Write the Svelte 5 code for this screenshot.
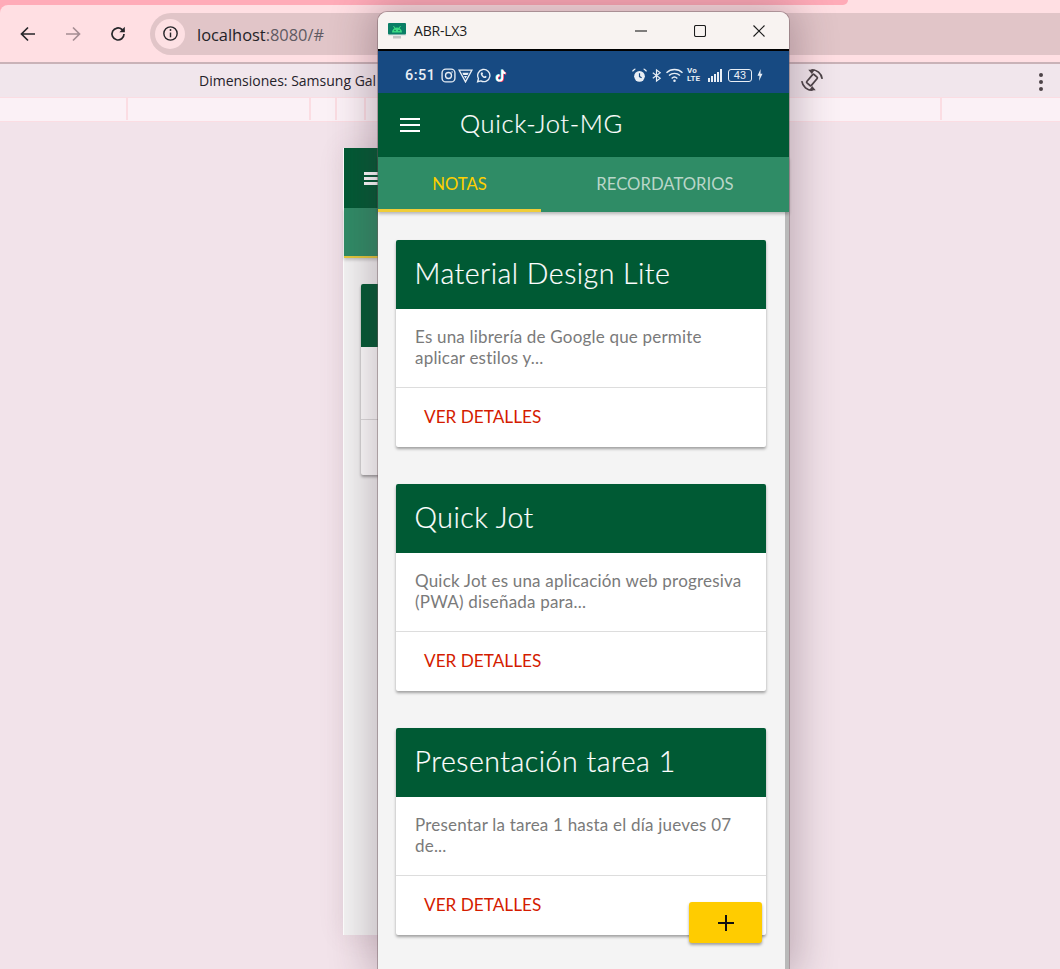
<script lang="ts">
  // Chrome devtools device view with the scrcpy phone window on top of it.
  const notes = [
    { title: 'Material Design Lite', text: 'Es una librería de Google que permite aplicar estilos y...' },
    { title: 'Quick Jot', text: 'Quick Jot es una aplicación web progresiva (PWA) diseñada para...' },
    { title: 'Presentación tarea 1', text: 'Presentar la tarea 1 hasta el día jueves 07 de...' }
  ];
  const ticks = [128, 183, 26, 29, 576];
</script>

<div class="page">
  <div class="top">
    <div class="tabstrip"></div>
    <header class="toolbar">
      <svg class="nav" viewBox="0 0 20 20" aria-hidden="true"><path d="M17 10H4M10 3.500 3.500 10l6.500 6.500" /></svg>
      <svg class="nav off" viewBox="0 0 20 20" aria-hidden="true"><path d="M3 10h13M10 3.500 16.500 10 10 16.500" /></svg>
      <svg class="nav" viewBox="0 0 20 20" aria-hidden="true"><path d="M16 10a6 6 0 1 1-2-4.500L16 7.500" /><path class="solid" d="M16.800 2.800v5.400h-5.400z" /></svg>
      <div class="omnibox">
        <span class="site">
          <svg viewBox="0 0 20 20" aria-hidden="true"><circle cx="10" cy="10" r="7" /><path d="M10 9v5" /><circle class="dot" cx="10" cy="6.300" r="1" /></svg>
        </span>
        <span class="url">localhost<span>:8080/#</span></span>
      </div>
    </header>
  </div>

  <div class="devbar">
    <span class="dims">Dimensiones: Samsung Gal</span>
    <svg class="rotate" viewBox="0 0 24 24" aria-hidden="true">
      <g transform="rotate(40 12 12)">
        <rect x="9" y="6.500" width="6" height="11" rx="1" />
        <path d="M5 4.500A10.500 10.500 0 0 1 19 4.500M19 19.500A10.500 10.500 0 0 1 5 19.500" />
        <path class="solid" d="M2.500 6.500 7.500 2 8 7.500zM21.500 17.500 16.500 22 16 16.500z" />
      </g>
    </svg>
    <span class="kebab"><i></i><i></i><i></i></span>
  </div>

  <div class="ruler">
    {#each ticks as w}
      <span class="tick" style="width:{w}px"></span>
    {/each}
  </div>

  <main class="stage">
    <section class="preview">
      <div class="preview-bar"><span class="burger small"><i></i><i></i><i></i></span></div>
      <div class="preview-tabs"></div>
      <div class="preview-card">
        <div class="pc-head"></div>
        <div class="pc-body"></div>
        <div class="pc-foot"></div>
      </div>
    </section>
  </main>

  <section class="window">
    <div class="titlebar">
      <svg class="appicon" viewBox="0 0 18 18" aria-hidden="true">
        <rect class="stand" x="5" y="14" width="8" height="2.500" />
        <rect class="base" x="0" y="12" width="18" height="2" />
        <rect class="screen" x="0" y="1" width="18" height="11.500" rx="1" />
        <path class="droid" d="M4 10.500a5 5 0 0 1 10 0z" />
        <path class="droid-line" d="M5.500 4 7 6.500M12.500 4 11 6.500" />
        <circle class="eye" cx="7" cy="8.500" r=".7" />
        <circle class="eye" cx="11" cy="8.500" r=".7" />
      </svg>
      <span class="wname">ABR-LX3</span>
      <span class="wbtns">
        <svg viewBox="0 0 12 12" aria-hidden="true"><path d="M0 6h12" /></svg>
        <svg viewBox="0 0 12 12" aria-hidden="true"><rect x=".5" y=".5" width="11" height="11" rx="1.500" /></svg>
        <svg viewBox="0 0 12 12" aria-hidden="true"><path d="M.5.5l11 11M11.500.5l-11 11" /></svg>
      </span>
    </div>

    <div class="status">
      <span class="time">6:51</span>
      <svg class="si" viewBox="0 0 14 14" aria-hidden="true"><rect x="1" y="1" width="12" height="12" rx="3.500" /><circle cx="7" cy="7" r="2.800" /><circle class="fill" cx="10.300" cy="3.700" r=".7" /></svg>
      <svg class="si" viewBox="0 0 14 14" aria-hidden="true"><path d="M1 2h12L7 13z" /><path class="fill" d="M4 4.500h6L9 6.500H5zM5.500 7.500h3L7 10z" /></svg>
      <svg class="si" viewBox="0 0 14 14" aria-hidden="true"><path d="M1.500 12.800l.8-3A5.700 5.700 0 1 1 4.500 12z" /><path class="fill" d="M5 4.300c-1 .8-.7 2 .4 3.300S8 9.800 9 9.300c.8-.4 1-1 .8-1.300L8.500 7.300l-.6.6C7 7.500 6.500 7 6 6l.6-.6L6 4.100c-.3-.2-.7-.1-1 .2z" /></svg>
      <svg class="si tiktok" viewBox="0 0 14 14" aria-hidden="true">
        <path class="tk-r" d="M8.700 1.500v7.800a2.500 2.500 0 1 1-2.500-2.500M8.700 2c.3 1.700 1.400 2.700 3 2.900" transform="translate(.7 .4)" />
        <path class="tk-c" d="M8.700 1.500v7.800a2.500 2.500 0 1 1-2.500-2.500M8.700 2c.3 1.700 1.400 2.700 3 2.900" transform="translate(-.6 -.2)" />
        <path class="tk-w" d="M8.700 1.500v7.800a2.500 2.500 0 1 1-2.500-2.500M8.700 2c.3 1.700 1.400 2.700 3 2.900" />
      </svg>
      <span class="grow"></span>
      <svg class="si alarm" viewBox="0 0 14 14" aria-hidden="true"><circle class="fill" cx="7" cy="7.800" r="5" /><path class="fill" d="M.6 3.800 3.600 1l-.9-.6L.3 2.200zM13.400 3.800 10.400 1l.9-.6 2.400 1.800z" /><path class="dark" d="M7 4.800v3.200l2 1.200" /></svg>
      <svg class="si bt" viewBox="0 0 14 14" aria-hidden="true"><path d="M3 4l8 6-4 3V1l4 3-8 6" /></svg>
      <svg class="si wifi" viewBox="0 0 16 14" aria-hidden="true"><path d="M1 5a10 10 0 0 1 14 0M3.200 7.500a7 7 0 0 1 9.600 0M5.500 10a3.700 3.700 0 0 1 5 0" /><circle class="fill" cx="8" cy="12" r="1.100" /></svg>
      <span class="volte">Vo<br />LTE</span>
      <span class="signal"><i></i><i></i><i></i><i></i><i></i></span>
      <span class="battery">43</span>
      <svg class="bolt" viewBox="0 0 6 12" aria-hidden="true"><path d="M3.600 0 .5 6.800h2L2 12l3.500-7.200h-2z" /></svg>
    </div>

    <div class="appbar">
      <span class="burger"><i></i><i></i><i></i></span>
      <span class="apptitle">Quick-Jot-MG</span>
    </div>

    <nav class="tabs">
      <span class="tab active">NOTAS</span>
      <span class="tab">RECORDATORIOS</span>
    </nav>

    <div class="content">
      {#each notes as note}
        <article class="card">
          <h2>{note.title}</h2>
          <p>{note.text}</p>
          <div class="actions"><span class="link">VER DETALLES</span></div>
        </article>
      {/each}
      <button class="fab" aria-label="Agregar">
        <svg viewBox="0 0 16 16" aria-hidden="true"><path d="M8 0v16M0 8h16" /></svg>
      </button>
    </div>
  </section>
</div>

<style>
  :global(body) { background: #f2e3ea; }

  .page {
    position: relative;
    display: flex;
    flex-direction: column;
    height: 969px;
    overflow: hidden;
    background: #f2e3ea;
    font-family: "Open Sans", "Liberation Sans", sans-serif;
  }

  /* browser chrome */
  .top {
    /* the small square shows through the toolbar's rounded top-left corner */
    background: linear-gradient(#ffabb8, #ffabb8) no-repeat 0 0 / 20px 20px, #ffdfe3;
  }
  .tabstrip {
    height: 5px;
    width: 848px;
    background: #ffabb8;
    border-bottom-right-radius: 8px;
  }
  .toolbar {
    display: flex;
    align-items: center;
    height: 59px;
    padding-left: 18px;
    box-sizing: border-box;
    background: #ffdfe3;
    border-top-left-radius: 8px;
    border-bottom: 2px solid #c9b2b7;
  }
  .nav { width: 20px; height: 20px; margin-right: 25px; flex: none; }
  .nav path { fill: none; stroke: #26262a; stroke-width: 1.700; }
  .nav.off path { stroke: #a58d93; }
  .nav .solid { fill: #26262a; stroke: none; }
  .omnibox {
    display: flex;
    align-items: center;
    flex: 1;
    height: 42px;
    margin-left: -3px;
    padding-left: 5px;
    border-radius: 21px 0 0 21px;
    background: #e1c5c8;
  }
  .site {
    display: grid;
    place-items: center;
    width: 30px;
    height: 30px;
    border-radius: 50%;
    background: #fde0e3;
  }
  .site svg { width: 19px; height: 19px; }
  .site circle, .site path { fill: none; stroke: #26262a; stroke-width: 1.500; }
  .site .dot { fill: #26262a; stroke: none; }
  .url { margin: 2px 0 0 12px; font-size: 16.400px; color: #232227; }
  .url span { color: #5f5a62; }

  .devbar {
    display: flex;
    align-items: center;
    height: 33px;
    padding-left: 199px;
    background: #f1e6ec;
    font-size: 14px;
    color: #25222a;
  }
  .dims { white-space: nowrap; }
  .rotate { position: absolute; left: 800px; top: 68px; width: 24px; height: 24px; }
  .rotate rect, .rotate path { fill: none; stroke: #4d4448; stroke-width: 1.700; }
  .rotate .solid { fill: #4d4448; stroke: none; }
  .kebab { position: absolute; left: 1039px; top: 73px; display: grid; gap: 3px; }
  .kebab i { width: 4px; height: 4px; border-radius: 50%; background: #4d4448; }

  .ruler {
    display: flex;
    height: 23px;
    background: #fbf1f6;
    border-top: 1px solid #fbdde3;
    border-bottom: 1px solid #fbdde3;
  }
  .tick { flex: none; border-right: 2px solid #fbdde3; height: 22px; box-sizing: border-box; }

  /* the page behind the phone window */
  .stage { flex: 1; padding: 26px 0 0 343px; }
  .preview {
    width: 360px;
    height: 787px;
    background: #f4f4f4;
    border-left: 1px solid #fff;
    box-sizing: border-box;
    box-shadow: 0 0 24px rgba(120, 90, 105, 0.12);
  }
  .preview-bar {
    height: 60px;
    padding: 24px 0 0 20px;
    box-sizing: border-box;
    background: #005a34;
  }
  .preview-tabs {
    height: 50px;
    background: #2f8c66;
    border-bottom: 2px solid #e3c83c;
    box-sizing: border-box;
    box-shadow: 0 2px 3px rgba(0, 0, 0, 0.2);
  }
  .preview-card {
    width: 300px;
    margin: 26px 0 0 17px;
    background: #fff;
    border-radius: 2px;
    box-shadow: 0 2px 3px rgba(0, 0, 0, 0.35);
  }
  .pc-head { height: 63px; background: #005a34; border-radius: 2px 2px 0 0; }
  .pc-body { height: 72px; }
  .pc-foot { height: 55px; border-top: 1px solid #ddd; }

  /* phone window */
  .window {
    position: absolute;
    left: 378px;
    top: 12px;
    width: 411px;
    height: 957px;
    display: flex;
    flex-direction: column;
    border-radius: 9px 9px 0 0;
    box-shadow: 0 0 0 1px rgba(110, 90, 95, 0.45), 0 0 40px 8px rgba(70, 40, 55, 0.3);
  }
  .titlebar {
    display: flex;
    align-items: center;
    height: 37px;
    flex: none;
    padding-left: 10px;
    box-sizing: border-box;
    background: #f8f3f1;
    border-radius: 9px 9px 0 0;
  }
  .appicon { width: 18px; height: 18px; margin-right: 8px; }
  .screen { fill: #0b7e66; }
  .base { fill: #e6e6e6; }
  .stand { fill: #c4c4c4; }
  .droid { fill: #3ddc84; }
  .droid-line { fill: none; stroke: #3ddc84; stroke-width: 1; }
  .eye { fill: #0b5e4c; }
  .wname { font-size: 14px; letter-spacing: -0.2px; color: #1c1c1c; }
  .wbtns { display: flex; margin-left: auto; padding-right: 24px; gap: 47px; }
  .wbtns svg { width: 12px; height: 12px; }
  .wbtns path, .wbtns rect { fill: none; stroke: #1c1c1c; stroke-width: 1.100; }

  .status {
    display: flex;
    align-items: center;
    flex: none;
    height: 44px;
    padding: 6px 26px 0 27px;
    box-sizing: border-box;
    border-top: 2px solid #000;
    background: #174a82;
    color: #e8eef5;
  }
  .time { font-size: 14.500px; font-weight: 500; margin-right: 5px; font-family: "Roboto", sans-serif; letter-spacing: 0.5px; }
  .si { width: 15px; height: 15px; margin-right: 2.500px; flex: none; }
  .si path, .si rect, .si circle { fill: none; stroke: #e8eef5; stroke-width: 1.250; }
  .si .fill { fill: #e8eef5; stroke: none; }
  .si .dark { stroke: #174a82; stroke-width: 1.100; }
  .tiktok path { stroke-width: 1.800; }
  .si .tk-r { stroke: #ff2d55; }
  .si .tk-c { stroke: #4de8ef; }
  .si .tk-w { stroke: #fff; }
  .grow { flex: 1; }
  .alarm { margin-right: 3px; }
  .bt { width: 13px; margin-right: 2px; }
  .wifi { width: 19px; height: 16px; margin-right: 3px; }
  .volte { font-family: "Roboto", sans-serif; font-size: 8px; font-weight: 700; line-height: 8px; margin-right: 8px; }
  .signal { display: flex; align-items: flex-end; gap: 1px; height: 13px; margin-right: 6px; }
  .signal i { width: 2px; background: #e8eef5; }
  .signal i:nth-child(1) { height: 4px; }
  .signal i:nth-child(2) { height: 6px; }
  .signal i:nth-child(3) { height: 8px; }
  .signal i:nth-child(4) { height: 10px; }
  .signal i:nth-child(5) { height: 13px; }
  .battery {
    width: 22px;
    height: 11px;
    line-height: 11px;
    text-align: center;
    font-family: "Roboto", sans-serif;
    font-size: 11px;
    border: 1px solid #e8eef5;
    border-radius: 3px;
    margin-right: 5px;
  }
  .bolt { width: 6px; height: 12px; }
  .bolt path { fill: #e8eef5; }

  .appbar {
    display: flex;
    align-items: center;
    flex: none;
    height: 64px;
    padding-left: 22px;
    box-sizing: border-box;
    background: #005a34;
  }
  .burger { display: grid; gap: 4px; width: 20px; margin-right: 40px; }
  .burger i { height: 2px; background: #fff; }
  .burger.small { width: 16px; margin: 0; gap: 2px; }
  .burger.small i { height: 3px; }
  .apptitle { font-family: "Lato", sans-serif; font-size: 25.500px; font-weight: 300; letter-spacing: 0.65px; color: #fff; -webkit-text-stroke: 0.2px #fff; position: relative; top: -2px; }

  .tabs {
    display: grid;
    grid-template-columns: 163px 1fr;
    flex: none;
    height: 55px;
    background: #2f8c66;
    box-shadow: 0 2px 3px rgba(0, 0, 0, 0.25);
    position: relative;
    z-index: 1;
  }
  .tab {
    display: grid;
    place-items: center;
    padding-bottom: 2px;
    box-sizing: border-box;
    font-family: "Lato", sans-serif;
    font-size: 16.700px;
    color: #b9d6c9;
  }
  .tab.active { color: #ffd000; box-shadow: inset 0 -3px 0 #f0cd38; }

  .content {
    position: relative;
    flex: 1;
    display: flex;
    flex-direction: column;
    gap: 37px;
    padding: 28px 0 0 18px;
    background: #f4f4f4;
    border-right: 4px solid #b9b9b9;
    box-sizing: border-box;
    min-height: 0;
  }
  .card {
    width: 370px;
    background: #fff;
    border-radius: 2px;
    box-shadow: 0 2px 3px rgba(0, 0, 0, 0.35);
  }
  .card h2 {
    margin: 0;
    height: 69px;
    padding-left: 18.500px;
    line-height: 67px;
    box-sizing: border-box;
    background: #005a34;
    border-radius: 2px 2px 0 0;
    font-family: "Lato", sans-serif;
    font-size: 28.500px;
    font-weight: 300;
    letter-spacing: 0.5px;
    color: #fff;
    -webkit-text-stroke: 0.2px #fff;
  }
  .card p {
    margin: 0;
    height: 78px;
    padding: 18px 19px 0;
    box-sizing: border-box;
    font-family: "Lato", sans-serif;
    font-size: 17px;
    letter-spacing: 0.2px;
    line-height: 20.500px;
    color: #7a7a7a;
  }
  .actions {
    display: flex;
    align-items: center;
    height: 60px;
    padding: 0 0 2px 28px;
    border-top: 1px solid #ddd;
    box-sizing: border-box;
  }
  .link { font-family: "Lato", sans-serif; font-size: 17.200px; color: #d41c00; }

  .fab {
    position: absolute;
    left: 311px;
    top: 690px;
    display: grid;
    place-items: center;
    width: 73px;
    height: 41px;
    padding: 0;
    border: 0;
    border-radius: 3px;
    background: #ffcc00;
    box-shadow: 0 2px 3px rgba(0, 0, 0, 0.35);
  }
  .fab svg { width: 16px; height: 16px; }
  .fab path { fill: none; stroke: #111; stroke-width: 2; }
</style>
